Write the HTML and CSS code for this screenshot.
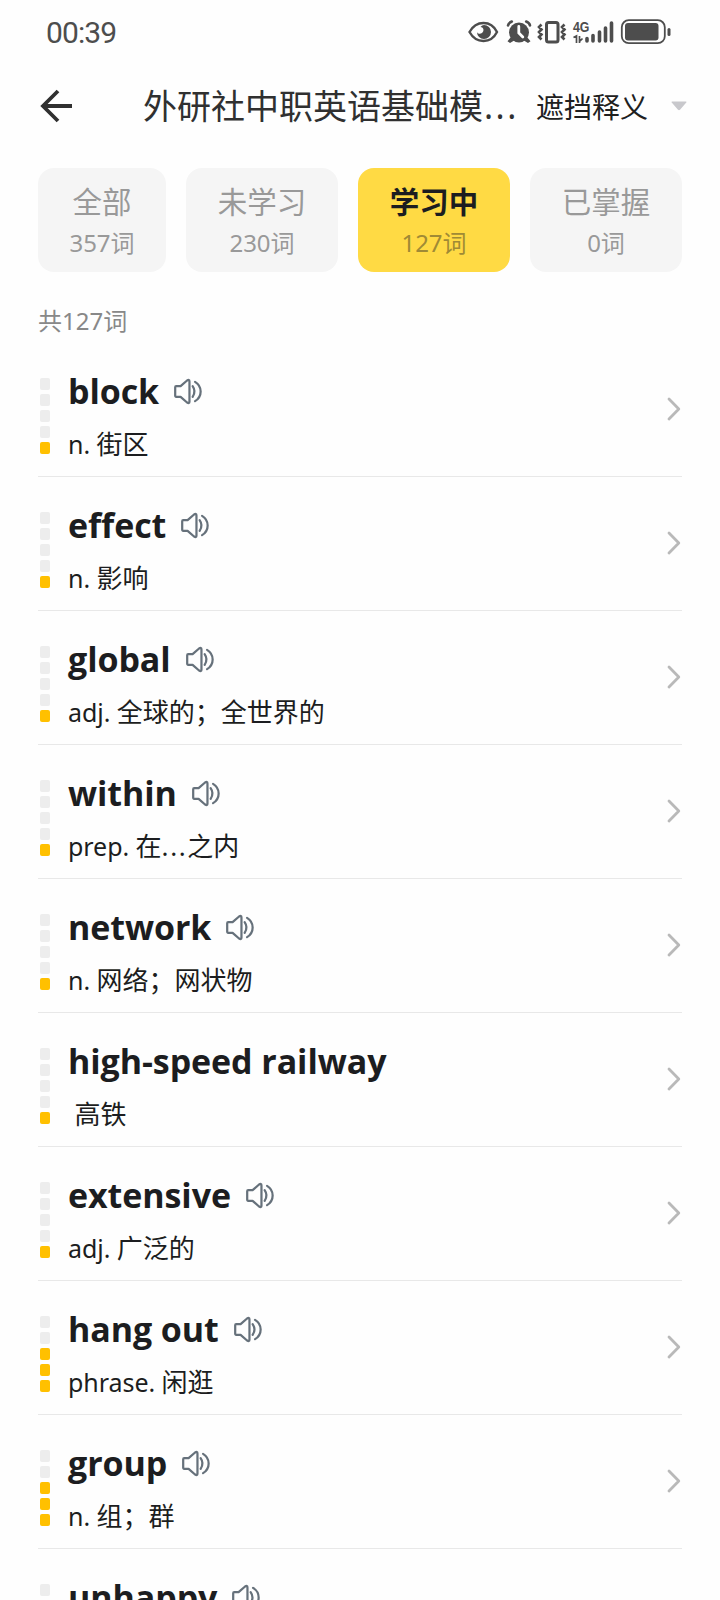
FILE: index.html
```html
<!DOCTYPE html>
<html lang="zh-CN">
<head>
<meta charset="utf-8">
<title>单词列表</title>
<link rel="stylesheet" href="styles.css">
</head>
<body>
<svg width="0" height="0" class="defs">
  <symbol id="speaker" viewBox="0 0 30 28"><g fill="none" stroke="#66717b" stroke-width="2.300" stroke-linecap="round" stroke-linejoin="round"><path d="M2.200 8.500h4.600L13.500 2.600Q16 1 16 3.500v21q0 2.500-2.500.9L6.800 19.500H2.200Q1.200 19.500 1.200 18.500V9.500Q1.200 8.500 2.200 8.500z"/><path d="M19.300 8.500q3.800 5.500 0 11"/><path d="M21.800 4q5.800 3.500 5.800 10t-5.800 10"/></g></symbol>
  <symbol id="chevron" viewBox="0 0 14 24"><path d="M2 2l9.800 10L2 22" fill="none" stroke="#b9b9b9" stroke-width="2.800" stroke-linecap="round" stroke-linejoin="round"/></symbol>
</svg>
<div class="screen">
  <header class="status">
    <span class="time">00:39</span>
    <svg class="status-icons" width="206" height="28" viewBox="0 0 206 28">
      <g fill="none" stroke="#4d4d4d" stroke-width="2.400">
        <path d="M1.500 14q5-9 14-9t13.500 9q-4.500 9-13.500 9t-14-9z"/>
        <path d="M40 7.500q.3-2.500 3.800-4M62 7.500q-.3-2.500-3.800-4" stroke-width="2.600" stroke-linecap="round"/>
      </g>
      <g fill="#4d4d4d">
        <path d="M16 7a7 7 0 1 1-7 7c1 3 6.500 2 6.500-2 0-2-1.500-3-3-3Q14 7 16 7z"/>
        <circle cx="51" cy="14.500" r="10"/>
        <path d="M43 19l-3.500 4.200 2.500 1.800 5-3zM59 19l3.500 4.200-2.500 1.800-5-3z"/>
      </g>
      <path d="M50.800 8.500v6.500l4 4" fill="none" stroke="#fff" stroke-width="2.800" stroke-linecap="round"/>
      <rect x="78.500" y="4.500" width="11.500" height="19.500" rx="2" fill="none" stroke="#4d4d4d" stroke-width="3"/>
      <path d="M73.500 6.500l-2.500 2.500 2.500 2.500-2.500 2.500 2.500 2.500-2.500 2.500 2.500 2.500M96.500 6.500l-2.500 2.500 2.500 2.500-2.500 2.500 2.500 2.500-2.500 2.500 2.500 2.500" fill="none" stroke="#4d4d4d" stroke-width="2.600"/>
      <text x="105" y="14" class="net" textLength="16.500" lengthAdjust="spacingAndGlyphs">4G</text>
      <path d="M105.500 19.500l3-1.500v7M111.500 18v7M111.500 23.500l3-3" fill="none" stroke="#4d4d4d" stroke-width="1.700"/>
      <path d="M119 20.500v2.500M125 17.500v5.500M131.500 14v9M137.500 10v13M143.500 5v18" stroke="#4d4d4d" stroke-width="3.600" stroke-linecap="round"/>
      <rect x="153.800" y="2.200" width="43" height="23" rx="7" fill="none" stroke="#4d4d4d" stroke-width="1.800"/>
      <rect x="157" y="5" width="33.500" height="17.500" rx="3" fill="#4d4d4d"/>
      <path d="M201 11.500v5" stroke="#4d4d4d" stroke-width="3" stroke-linecap="round"/>
    </svg>
  </header>
  <nav class="bar">
    <svg class="back" width="34" height="34" viewBox="0 0 34 34"><path d="M18 2L3 17l15 15M3 17h29" fill="none" stroke="#303030" stroke-width="3.800"/></svg>
    <h1 class="title">外研社中职英语基础模<span class="dots">...</span></h1>
    <span class="mode">遮挡释义</span>
    <svg class="caret" width="16" height="10" viewBox="0 0 16 10"><path d="M1 .5h14q1 .3.300 1L9 8.800q-1 .8-2 0L.7 1.500Q0 .8 1 .5z" fill="#c8c8cc"/></svg>
  </nav>
  <div class="tabs">
    <div class="tab tab-all"><b>全部</b><span>357词</span></div>
    <div class="tab"><b>未学习</b><span>230词</span></div>
    <div class="tab active"><b>学习中</b><span>127词</span></div>
    <div class="tab"><b>已掌握</b><span>0词</span></div>
  </div>
  <p class="total">共127词</p>
  <ul class="list" id="list"></ul>
</div>
<script src="app.js"></script>
</body>
</html>
```
FILE: styles.css
```css
* { box-sizing: border-box; margin: 0; padding: 0; }
body { background: #fefefe; font-family: "Noto Sans", "Noto Sans CJK SC", sans-serif; color: #1c1d20; }
.defs { display: block; }
.screen { width: 720px; height: 1600px; overflow: hidden; }
.status { height: 64px; padding: 18px 46px 0 46px; display: flex; justify-content: space-between; align-items: flex-start; }
.time { font: 30px/30px Roboto, sans-serif; color: #4d4d4d; letter-spacing: -0.9px; }
.status-icons { display: block; }
.net { font: bold 14px "Liberation Sans", sans-serif; fill: #4d4d4d; }
.bar { height: 84px; display: flex; align-items: center; padding: 0 33px 0 40px; color: #303030; }
.title { font-size: 34px; line-height: 48px; font-weight: 400; font-family: "Noto Sans CJK SC", sans-serif; width: 393px; margin: -1px 0 0 69px; white-space: nowrap; }
.dots { font-family: "Noto Sans", sans-serif; letter-spacing: 2.500px; margin-left: 1px; }
.mode { font-size: 28px; line-height: 40px; font-family: "Noto Sans CJK SC", sans-serif; color: #202020; width: 135px; margin-top: -1px; white-space: nowrap; }
.caret { margin: 0 0 0 auto; }
.tabs { display: flex; gap: 20px; padding: 20px 38px 0; }
.tab { width: 152px; height: 104px; border-radius: 16px; background: #f5f5f5; color: #999; display: flex; flex-direction: column; align-items: center; padding-top: 11px; }
.tab-all { width: 128px; }
.tab b { font: 400 29.500px/42px "Noto Sans CJK SC", sans-serif; }
.tab span { font-size: 24px; line-height: 40px; margin-top: 2px; }
.active { background: #ffda44; }
.active b { font-weight: 700; color: #1c1d20; }
.active span { color: #a08a35; }
.total { font-size: 24px; line-height: 40px; color: #888; padding: 29px 38px 0; height: 71px; }
.list { list-style: none; padding: 0 38px; }
.row { height: 134px; border-bottom: 1px solid #e8e8e8; display: flex; align-items: flex-start; padding-top: 35px; }
.level { display: grid; gap: 4px; margin: 0 18px 0 2px; }
.level i { width: 10px; height: 12px; border-radius: 2px; background: #ededed; }
.level .on { background: #ffc000; }
.text { flex: 1; margin-top: -12px; }
.word { display: flex; gap: 15px; align-items: center; font: bold 34px/50px "Open Sans", sans-serif; letter-spacing: -0.08px; }
.word svg { width: 29px; height: 27px; }
.mean { font-size: 26px; line-height: 38px; margin-top: 8px; white-space: pre; font-family: "Noto Sans CJK SC", sans-serif; }
.pos { font-family: "Noto Sans", sans-serif; font-size: 25px; letter-spacing: -0.05px; }
.ell { font-family: "Noto Sans", sans-serif; letter-spacing: 1.600px; }
.go { width: 14px; height: 24px; margin: 19px 1px 0 0; }
```
FILE: app.js
```js
const words = [
  ['block', 'n.', '街区', 1],
  ['effect', 'n.', '影响', 1],
  ['global', 'adj.', '全球的；全世界的', 1],
  ['within', 'prep.', '在<span class="ell">...</span>之内', 1],
  ['network', 'n.', '网络；网状物', 1],
  ['high-speed railway', '', '高铁', 1],
  ['extensive', 'adj.', '广泛的', 1],
  ['hang out', 'phrase.', '闲逛', 3],
  ['group', 'n.', '组；群', 3],
  ['unhappy', 'adj.', '', 3]
];
document.getElementById('list').innerHTML = words.map(([word, pos, mean, level]) => `
<li class="row">
  <div class="level">${[5, 4, 3, 2, 1].map(n => `<i class="${n <= level ? 'on' : ''}"></i>`).join('')}</div>
  <div class="text">
    <div class="word">${word}${pos ? '<svg><use href="#speaker"/></svg>' : ''}</div>
    ${mean ? `<div class="mean"><span class="pos">${pos} </span>${mean}</div>` : ''}
  </div>
  <svg class="go"><use href="#chevron"/></svg>
</li>`).join('');
```
